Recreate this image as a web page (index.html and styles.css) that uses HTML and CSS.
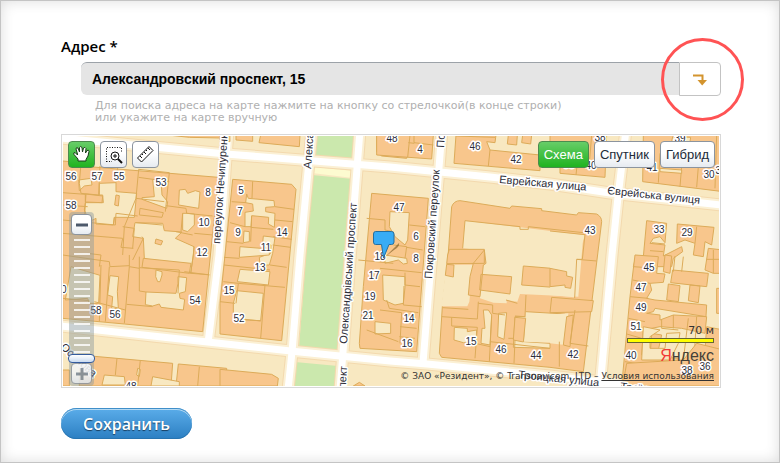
FILE: index.html
```html
<!DOCTYPE html>
<html lang="ru">
<head>
<meta charset="utf-8">
<meta name="viewport" content="width=device-width, initial-scale=1">
<title>Адрес</title>
<link rel="stylesheet" href="styles.css">
</head>
<body>
<form class="page">
  <label class="field-label" for="address">Адрес *</label>
  <div class="search">
    <input class="search-input" id="address" type="text" value="Александровский проспект, 15">
    <button class="search-button" type="button" aria-label="Найти на карте">
      <svg width="14" height="12" viewBox="0 0 14 12"><path d="M0 1.500H9.500V6" fill="none" stroke="#d3942e" stroke-width="2"/><path d="M4.500 6H14L9.200 11.500Z" fill="#d3942e"/></svg>
    </button>
    <span class="highlight"></span>
  </div>
  <p class="hint">Для поиска адреса на карте нажмите на кнопку со стрелочкой(в конце строки)<br>или укажите на карте вручную</p>

  <div class="map">
    <svg class="map-canvas" viewBox="63 136 656 250" preserveAspectRatio="xMinYMin slice">
      <rect x="63" y="136" width="2000" height="250" fill="#f8e8c1"/>

      <!-- park -->
      <g fill="#cbe8ad">
        <path d="M316 136H357L355 161L316 158Z"/>
        <path d="M312 175L353 179L341 353L299 348Z"/>
        <path d="M295 362L338 366L336 387H293Z"/>
      </g>
      <path d="M313 167L354 171L353 178L312 173ZM299 349L341 354V358L297 354Z" fill="#fdfbd0"/>

      <!-- streets -->
      <g id="streets" fill="none" stroke-linejoin="round">
        <g stroke="#f3d9ae" stroke-width="13">
          <path d="M60 138L226 154L390 167L490 177L550 184L610 193L722 205"/>
          <path d="M60 326L226 344L300 352L390 361L427 364L550 376L722 396"/>
          <path d="M228 130L219 255L208 343M312 130L300 255L292 352L288 390M360 130L352 233L343 352L340 390M442 130L438 180L429 288L423 363M626 130L618 197L612 255L600 388"/>
        </g>
        <g stroke="#fbf0d4" stroke-width="11">
          <path d="M60 138L226 154L390 167L490 177L550 184L610 193L722 205"/>
          <path d="M60 326L226 344L300 352L390 361L427 364L550 376L722 396"/>
          <path d="M228 130L219 255L208 343M312 130L300 255L292 352L288 390M360 130L352 233L343 352L340 390M442 130L438 180L429 288L423 363M626 130L618 197L612 255L600 388"/>
        </g>
        <g stroke="#fff" stroke-width="7">
          <path d="M60 138L226 154L390 167L490 177L550 184L610 193L722 205"/>
          <path d="M60 326L226 344L300 352L390 361L427 364L550 376L722 396"/>
          <path d="M228 130L219 255L208 343M312 130L300 255L292 352L288 390M360 130L352 233L343 352L340 390M442 130L438 180L429 288L423 363M626 130L618 197L612 255L600 388"/>
        </g>
      </g>

      <!-- buildings, one group per map tile, drawn at three units to the pixel -->
      <g transform="translate(56 130) scale(.33333)" fill="#f8c68c" stroke="#dcab58" stroke-width="3">
        <path d="M335 15H497L495 24L400 22Z"/>
        <path d="M20 93L75 98V108L487 142L440 605L205 582L20 565Z"/>
        <path fill="#f8e8c1" d="M68 150L105 145L108 165L85 168L70 182Z"/>
        <path fill="#f8e8c1" d="M130 160L180 158V185L242 190L235 262L175 262L172 285L120 282V265L100 275L85 240L88 218H142L140 195H130Z"/>
        <path fill="#f8e8c1" d="M290 148L315 150L318 195L335 215L332 235L258 208V203L295 200Z"/>
        <path fill="#f8e8c1" d="M370 180L388 178L395 190L418 182L432 186L428 235L368 225Z"/>
        <path fill="#f8e8c1" d="M237 278L320 280L325 302L378 306L358 325L414 350L412 375L404 430L265 385L262 325L230 320Z"/>
        <path fill="#f8e8c1" d="M395 250L415 252V285L395 305L380 300V250Z"/>
        <path d="M180 195L190 197L187 228L176 225ZM252 235L322 248L318 262L250 255ZM300 327L320 333L315 345L297 340ZM88 192L140 198L138 218L88 216Z"/>
        <path d="M262 385L405 400L400 430L258 412Z"/>
        <path fill="#f8e8c1" d="M45 410L132 436L128 520H100L95 505L28 510Z"/>
        <path fill="#f8e8c1" d="M162 437L188 440L184 485L187 535H167L170 500L155 495Z"/>
        <path fill="#f8e8c1" d="M300 420L318 425V435L312 455H305L299 440Z"/>
        <path fill="#f8e8c1" d="M366 440L392 443L388 485L370 490L372 505L386 508L382 540L315 532L310 522L290 528L268 524L270 486L360 490L366 460Z"/>
        <path fill="none" d="M75 100L70 160L75 190L128 195L132 108M185 112L180 158M248 118L240 205L205 290L200 375M248 118L340 128L328 245M248 142L340 155M20 188L88 193M90 192L85 270M20 225L95 230M20 270L178 285L180 250L245 258M20 310L200 325L195 352L232 355M175 262L172 285M258 320L262 325L230 390M200 290L235 295L230 355M240 205L325 215M240 278L318 285M330 227L390 235L392 250L470 258M380 250L375 305M360 305L410 315M415 310L470 315M414 350L412 375L404 430L460 434M20 375L160 395L162 410L220 407M220 375V410L250 415M250 380V413L370 420L366 490M220 410L205 580M250 412V483L270 486M160 410L148 575M135 405L130 575M20 505L100 512M115 515L208 540M212 523L290 530M385 425L460 435M95 370L135 375L130 410"/>
        <path d="M20 720H40V768H20ZM70 675L183 685L350 700L345 768H70ZM367 702L512 715V768H360Z"/>
        <path fill="#f8e8c1" d="M145 735L205 740L208 765H138ZM290 740L370 755V768H285ZM245 715L253 718L250 740L242 735Z"/>
        <path fill="none" d="M183 685L178 735M253 690L245 768M430 710L425 768"/>
      </g>

      <g transform="translate(220 130) scale(.33333)" fill="#f8c68c" stroke="#dcab58" stroke-width="3">
        <path d="M0 15H30V35L0 30ZM48 15H98V34L48 30ZM122 15H240L238 50L117 38Z"/>
        <path d="M38 148L215 163L228 178L185 632L0 612V520L12 405Z"/>
        <path fill="#f8e8c1" d="M80 192L85 205L162 212L164 230L137 232V245L165 250L163 292L145 282L146 262L95 257L93 290H75V247L100 243L98 222L77 218Z"/>
        <path fill="#f8e8c1" d="M72 303L88 305V335L70 338ZM130 318L165 322L158 370L148 405H120L118 382L152 370L153 345L128 340Z"/>
        <path fill="#f8e8c1" d="M60 350L148 357V375L58 382Z"/>
        <path fill="#f8e8c1" d="M60 418L150 425L145 465L52 455Z"/>
        <path fill="#f8e8c1" d="M50 482L130 490L122 572L75 570L40 562V520Z"/>
        <path fill="none" d="M98 154L96 205M35 215L78 218M30 278L75 290M20 335L70 340M165 230L222 238M165 270L218 275M92 292L160 298M95 258L92 335M160 320L215 328M158 345L212 352M12 382L58 385M12 405L150 420M150 405L200 412M10 455L55 460L48 520M55 460L195 472M135 465L122 625M0 515L45 520M75 568L122 573"/>
        <path d="M0 718L155 733L175 745L172 768H0Z"/>
        <path d="M470 15H560V85L485 78L470 65Z"/>
        <path d="M455 190L625 205L590 665L420 655L418 640L430 470Z"/>
        <path d="M400 768L418 757L435 768Z"/>
      </g>

      <g transform="translate(380 130) scale(.33333)" fill="#f8c68c" stroke="#dcab58" stroke-width="3">
        <path d="M-10 15H160L155 87L-10 75Z"/>
        <path fill="none" d="M90 15L83 82M102 15V38L160 45M85 38L103 40"/>
        <path d="M228 15H348L345 38L320 35L330 60L480 75V122L222 100Z"/>
        <path fill="none" d="M330 60L325 108M228 18L345 22"/>
        <path d="M385 15H412L410 45L382 42ZM428 15H455L452 42L425 38Z"/>
        <path fill="#f8e8c1" d="M30 245L88 248L83 330L75 345L45 320L28 290Z"/>
        <path fill="#f8e8c1" d="M8 435L75 440V472L70 520L45 525L22 515L10 510ZM-15 575L32 580V610L-15 612Z"/>
        <path fill="#f8e8c1" d="M15 375L80 385L82 400L70 402L55 390L15 400Z"/>
        <path fill="none" d="M88 285L135 290M80 352L128 360M-40 265L15 270V300L40 305M0 415L125 428M75 428V465L120 470M72 468L70 525L125 530M20 510L28 535L115 548M60 590L110 595M0 540L65 548L60 640M40 345L80 350L75 385M58 620L105 625M-40 600L55 635M-65 390L40 400"/>
        <path d="M215 230Q222 212 240 212L390 235L395 228L485 236V242L590 255L595 248L650 252Q665 260 665 275L610 725L510 712L185 682L178 670L187 530L203 395Z"/>
        <path fill="#f8e8c1" stroke="none" d="M255 272L610 315L595 500L420 492L412 515L380 510V520L340 518L300 505V490L270 495L268 515L262 529L184 529L199 404H315V362L248 355Z"/>
        <path fill="none" d="M248 355L255 272L420 290V298L445 298V290L610 308"/>
        <path d="M203 375L208 358H313V400L200 401ZM313 360L318 400L310 405L300 500L265 495L270 440L280 400ZM200 403L222 405L220 441L196 436ZM303 433L395 440L390 492L299 480ZM430 408L575 420L560 475L425 465Z"/>
        <path fill="#f8e8c1" d="M223 592L262 595V605L290 600L288 640L250 638L222 630Z"/>
        <path fill="#f8e8c1" d="M310 540H325L335 555L330 645L303 640L306 595H315ZM356 550L380 548L372 628L353 620ZM405 560H438L432 635L510 640V655L400 652Z"/>
        <path fill="#f8e8c1" stroke="none" d="M437 545L555 552V640L432 635Z"/>
        <path fill="none" d="M188 533L265 538M185 560L292 567L295 515M215 562V588L292 592L285 685M295 520L338 525V550L375 555M335 560L328 695M378 510L412 520M408 560L402 700M330 635L510 655M438 495L435 560L405 558M285 640L330 650M385 625L402 625M437 545L555 552"/>
        <path d="M405 562L437 565L430 636L400 630Z"/>
      </g>

      <g transform="translate(550 130) scale(.33333)" fill="#f8c68c" stroke="#dcab58" stroke-width="3">
        <path d="M0 15H170L165 142L30 130V100L0 95ZM280 15H520V185L278 155Z"/>
        <path fill="none" d="M83 90L78 135M125 15L118 100M330 70L325 158M395 110L390 170M445 110L440 172M500 15L495 175"/>
        <path fill="#f8e8c1" d="M330 115L395 120V130L330 125ZM368 20L422 22L420 35H365Z"/>
        <path fill="#f8e8c1" d="M0 308L105 316L80 388L72 502L0 495ZM0 555L55 550L45 645L0 640Z" stroke="none"/>
        <path fill="none" d="M0 303L105 314L97 388H80L74 504"/>
        <path d="M0 415L50 425V438L68 442L62 475L45 472V465L0 470ZM5 502L130 512L125 545L0 548ZM50 560L70 555L60 650L40 645Z"/>
        <path fill="none" d="M80 388L140 393M75 540L60 640L115 648M28 635V710"/>
        <path d="M290 272L350 280L345 338L330 320L310 325L300 340L345 345L340 378L395 350L398 365L370 385L365 410H250L258 378L280 380Z"/>
        <path d="M382 282L492 292L485 345L465 335L460 380L430 375L435 340L405 330L380 340Z"/>
        <path d="M255 375L325 380L320 430L345 432L340 457L300 460L305 480L290 505L315 510L470 525L468 560L315 535L310 545L290 550L330 555V570L370 555L470 560L465 610L395 595L330 590L280 600L275 675L385 685L380 730L510 745V768H215L240 500Z"/>
        <path d="M345 375L365 378L360 430L340 425ZM368 420L475 430L470 470L362 458ZM355 462L390 467L385 515L350 510ZM420 465L450 468L445 518L415 512ZM475 355L520 360V430H490L465 420ZM500 475H520V550H500ZM305 610L335 615L325 660L302 655ZM470 590L520 600V660H465Z"/>
        <path fill="none" d="M305 338L345 342M300 362L340 365M250 410L320 415M248 450L300 460M240 500L295 505M235 565L285 575M230 612L275 625M225 695L285 705M440 290L435 340M375 378L370 425M400 380L395 425M415 565L400 690M440 560L430 720M335 570V595L385 600M370 555V595M520 388H470M490 360V430"/>
        <path d="M230 700L400 690L440 640L520 660V768H218Z"/>
        <path fill="#f8e8c1" d="M280 590L330 600L300 620V655H345L350 610L390 608L385 640L360 690L275 690Z"/>
      </g>

      <!-- street names -->
      <g class="street">
        <text transform="translate(220 244) rotate(-86)">переулок Нечипуренко</text>
        <text transform="translate(311 169) rotate(-86)">Александровский</text>
        <text transform="translate(347 344) rotate(-86)">Олександрівський проспект</text>
        <text transform="translate(344 412) rotate(-86)">проспект</text>
        <text transform="translate(432 279) rotate(-86)">Покровский переулок</text>
        <text transform="translate(444 148) rotate(-86)">Покровский</text>
        <text transform="translate(499 183) rotate(5)">Еврейская улица</text>
        <text transform="translate(607 194) rotate(6)">Єврейська вулиця</text>
        <text transform="translate(518 378) rotate(6)">Троицкая улица</text>
        <text transform="translate(620 390) rotate(6)">Троїцька</text>
        <text transform="translate(60 348) rotate(42)">Осипова</text>
      </g>

      <!-- house numbers -->
      <g class="house">
        <text x="71" y="180">56</text><text x="97" y="180">57</text><text x="119" y="180">55</text><text x="161" y="186">53</text>
        <text x="208" y="196">8</text><text x="204" y="226">10</text><text x="202" y="256">12</text><text x="71" y="209">58</text>
        <text x="195" y="304">54</text><text x="96" y="314">58</text><text x="115" y="318">56</text><text x="131" y="390">48</text>
        <text x="241" y="194">5</text><text x="240" y="215">7</text><text x="238" y="236">9</text><text x="282" y="236">14</text>
        <text x="266" y="251">11</text><text x="260" y="271">13</text><text x="229" y="294">15</text><text x="239" y="322">52</text>
        <text x="392" y="142">48</text><text x="420" y="153">4</text><text x="475" y="150">46</text><text x="516" y="163">42</text>
        <text x="399" y="211">47</text><text x="416" y="240">6</text><text x="416" y="262">8</text><text x="380" y="260">18</text>
        <text x="374" y="279">17</text><text x="370" y="300">19</text><text x="368" y="319">21</text>
        <text x="409" y="322">14</text><text x="407" y="347">16</text><text x="471" y="345">15</text><text x="501" y="353">46</text><text x="536" y="359">44</text>
        <text x="569" y="168">38</text><text x="591" y="169">40</text><text x="600" y="141">38</text><text x="680" y="142">39</text><text x="652" y="171">41</text>
        <text x="709" y="178">30</text><text x="721" y="174">32</text><text x="590" y="234">43</text><text x="659" y="233">33</text><text x="687" y="236">29</text>
        <text x="649" y="271">45</text><text x="641" y="291">47</text><text x="641" y="311">49</text><text x="636" y="330">51</text>
        <text x="631" y="359">40</text><text x="573" y="358">42</text><text x="687" y="374">38</text><text x="705" y="370">36</text><text x="61" y="293">60</text>
      </g>

      <!-- placemark -->
      <path d="M385 257L399 243Q400 247 394 250Z" fill="#74551e" opacity=".6"/>
      <path d="M375.500 231.500H391.500Q394 231.500 394 234V242Q394 244.500 391.500 244.500H389L383.500 258L381.500 244.500H375.500Q373.500 244.500 373.500 242V234Q373.500 231.500 375.500 231.500Z" fill="#38acf5" stroke="#256e9f"/>
    </svg>

    <div class="toolbar">
      <button class="map-button tool active" type="button" aria-label="Переместить карту">
        <svg width="19" height="19" viewBox="0 0 19 19"><path d="M6 16V14L2 9.500Q1 7.500 3 7.500L5.500 10V9L4 4Q4 2 6 3L7.500 7V2.500Q8.500 .5 10 2.500L10.500 7L11.500 3Q13 1.500 14 3.500L13.500 8L15 5.500Q17 4.500 17 6.500L16 11L14 14.500V16Z" fill="#fff" stroke="#183b18"/></svg>
      </button>
      <button class="map-button tool" type="button" aria-label="Увеличить область">
        <svg width="19" height="19" viewBox="0 0 19 19" fill="none" stroke="#111"><path d="M2.500 17V2.500H17.500V8M2.500 16.500H8" stroke-dasharray="1 1.500"/><circle cx="11" cy="11" r="4" fill="#fff"/><path d="M9 11H13M11 9V13"/><path d="M14 14L18 18" stroke-width="2"/></svg>
      </button>
      <button class="map-button tool" type="button" aria-label="Линейка">
        <svg width="19" height="19" viewBox="0 0 19 19" fill="#fff" stroke="#111"><path d="M1.500 13L13 1.500L17 5.500L5.500 17Z"/><path d="M4 11L6 13M6 9L7 10M8 7L10 9M10 5L11 6M12 3L14 5"/></svg>
      </button>
    </div>

    <div class="types">
      <button class="map-button active" type="button">Схема</button>
      <button class="map-button" type="button">Спутник</button>
      <button class="map-button" type="button">Гибрид</button>
    </div>

    <div class="zoom">
      <button class="map-button zoom-button" type="button" aria-label="Уменьшить"><svg width="12" height="12" viewBox="0 0 12 12"><path d="M0 6H12" stroke="#4c596b" stroke-width="3"/></svg></button>
      <input class="zoom-range" type="range" min="0" max="17" value="17" aria-label="Масштаб">
      <button class="map-button zoom-button faded" type="button" aria-label="Увеличить"><svg width="12" height="12" viewBox="0 0 12 12"><path d="M0 6H12M6 0V12" stroke="#7c8997" stroke-width="3"/></svg></button>
    </div>

    <div class="legend">
      <span class="scale-text">70 м</span>
      <span class="scale-bar"></span>
      <span class="logo"><span class="logo-first">Я</span>ндекс</span>
      <span class="copyright">© ЗАО «Резидент», © Transnavicom, LTD – <a href="#terms">Условия использования</a></span>
    </div>
  </div>

  <button class="save" type="submit">Сохранить</button>
</form>
</body>
</html>
```
FILE: styles.css
```css
* { box-sizing: border-box; }

body { margin: 0; background: #fff; }

.page {
  min-height: 100vh;
  padding: 35px 58px 22px 60px;
  border: 1px solid #c4c4c4;
  box-shadow: inset 0 0 14px #dcdcdc;
  font-family: "Liberation Sans", Arial, sans-serif;
}

.field-label {
  display: block;
  font: 600 15px/20px "Open Sans", "Noto Sans", sans-serif;
  color: #000;
}

.search {
  position: relative;
  display: flex;
  height: 34px;
  margin: 6px 0 0 20px;
}

.search-input {
  flex: 1;
  min-width: 0;
  height: 33px;
  padding: 0 11px;
  border: 0;
  border-top: 1px solid #9ca2a8;
  border-radius: 6px 0 0 6px;
  background: #e5e5e5;
  color: #000;
  font: bold 14px "Liberation Sans", Arial, sans-serif;
}

.search-button {
  display: flex;
  align-items: center;
  justify-content: center;
  width: 42px;
  padding: 2px 0 0;
  border: 1px solid #c3c3c3;
  border-radius: 0 4px 4px 0;
  background: #fff;
}

.highlight {
  position: absolute;
  top: -24px;
  right: -23px;
  width: 83px;
  height: 83px;
  border: 3px solid #ff5354;
  border-radius: 50%;
  pointer-events: none;
}

.hint {
  margin: 4px 0 10px 34px;
  color: #b0b0b0;
  font: 11px/12px "DejaVu Sans", Verdana, sans-serif;
}

.map {
  position: relative;
  height: 254px;
  padding: 1px;
  border: 1px solid #d8d8d8;
  overflow: hidden;
}

.map-canvas { display: block; width: 100%; height: 250px; }

.street, .house {
  fill: #2d2d38;
  stroke: #fff;
  stroke-width: 3px;
  stroke-linejoin: round;
  paint-order: stroke;
  font-family: "Liberation Sans", Arial, sans-serif;
}
.street { font-size: 11px; }
.house { font-size: 10px; text-anchor: middle; }

.map-button {
  display: flex;
  align-items: center;
  justify-content: center;
  height: 27px;
  padding: 0 5px;
  border: 1px solid #8c949e;
  border-radius: 4px;
  background: linear-gradient(#fff, #fff 45%, #e6ebf1);
  color: #222b38;
  font: 13px "Liberation Sans", Arial, sans-serif;
}
.map-button.active {
  border-color: #4c8b4e;
  background: linear-gradient(#67cd68, #20b320);
  color: #fff;
}
.map-button.tool { width: 27px; padding: 0; }

.toolbar, .types { position: absolute; top: 6px; display: flex; gap: 5px; }
.toolbar { left: 6px; }
.types { right: 5px; }

.zoom {
  position: absolute;
  top: 77px;
  left: 7px;
  display: flex;
  flex-direction: column;
  align-items: center;
  width: 25px;
  padding: 2px 0;
  border-radius: 4px;
  background: rgba(137, 152, 158, .45);
}
.map-button.zoom-button { width: 21px; height: 21px; padding: 0; }
.zoom-button.faded { opacity: .8; }

.zoom-range {
  appearance: none;
  writing-mode: vertical-lr;
  width: 27px;
  height: 128px;
  margin: 0;
  background: repeating-linear-gradient(transparent 0 4px, rgba(255, 255, 255, .8) 4px 6px, transparent 6px 7px) center / 16px 100% no-repeat;
}
.zoom-range::-webkit-slider-thumb {
  appearance: none;
  width: 27px;
  height: 9px;
  border: 1px solid #345b9d;
  border-radius: 4px;
  background: linear-gradient(#fff, #cbdcf1);
}

.legend {
  position: absolute;
  right: 6px;
  bottom: 4px;
  display: flex;
  flex-direction: column;
  align-items: flex-end;
  color: #333;
  font: 9px/14px "DejaVu Sans", Verdana, sans-serif;
}
.scale-text { font-size: 11px; }
.scale-bar {
  width: 87px;
  height: 5px;
  border: 1px solid #666633;
  background: #ff0;
}
.logo {
  color: #454039;
  font: 16px/26px "Liberation Sans Narrow", "Liberation Sans", sans-serif;
}
.logo-first { color: #f23b35; }
.copyright { white-space: nowrap; }
.copyright a { color: inherit; }

.save {
  display: block;
  height: 31px;
  margin-top: 20px;
  padding: 0 22px;
  border: 0;
  border-radius: 16px;
  background: linear-gradient(#5badea, #2c7fc2);
  box-shadow: inset 0 1px #408fc9, inset 0 2px #b4daf4, inset 0 -1px #2874b0;
  color: #fff;
  font: 600 16px "Open Sans", "Noto Sans", sans-serif;
  text-shadow: 0 1px 1px #173c5c;
}
```
